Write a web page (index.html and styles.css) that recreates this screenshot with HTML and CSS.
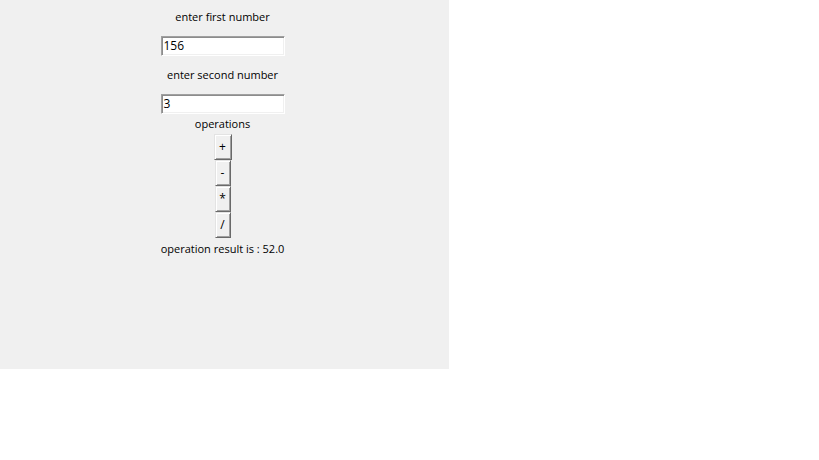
FILE: index.html
```html
<!DOCTYPE html>
<html>
<head>
<meta charset="utf-8">
<link rel="stylesheet" href="styles.css">
</head>
<body>
<div class="window">
  <div class="label label-first">enter first number</div>
  <div class="entry entry-first">156</div>
  <div class="label label-second">enter second number</div>
  <div class="entry">3</div>
  <div class="label label-ops">operations</div>
  <div class="buttons">
    <div class="btn btn-wide">+</div>
    <div class="btn">-</div>
    <div class="btn">*</div>
    <div class="btn">/</div>
  </div>
  <div class="label label-result">operation result is : 52.0</div>
</div>
</body>
</html>
```
FILE: styles.css
```css
html, body {
  margin: 0;
  padding: 0;
  background: #ffffff;
}
.window {
  width: 449px;
  height: 369px;
  background: #f0f0f0;
  box-sizing: border-box;
  padding-right: 4px;
  display: flex;
  flex-direction: column;
  align-items: center;
  font-family: "Open Sans", "Noto Sans", sans-serif;
  font-size: 11px;
  color: #000;
}
.label {
  height: 21px;
  line-height: 21px;
  white-space: nowrap;
}
.label-first {
  margin-top: 6px;
}
.entry-first {
  margin-top: 9px;
}
.label-second {
  margin-top: 8px;
  margin-bottom: 9px;
}
.entry {
  width: 124px;
  height: 20px;
  box-sizing: border-box;
  background: #fff;
  border-top: 1px solid #a0a0a0;
  border-left: 1px solid #a0a0a0;
  border-right: 1px solid #ffffff;
  border-bottom: 1px solid #ffffff;
  box-shadow: inset 1px 1px 0 #8c8c8c, inset -1px -1px 0 #f0f0f0;
  padding-left: 2px;
  line-height: 17px;
  font-size: 12px;
}
.label-ops {
  height: 20px;
  line-height: 20px;
}
.buttons {
  display: flex;
  flex-direction: column;
  align-items: center;
}
.btn {
  width: 16px;
  height: 26px;
  box-sizing: border-box;
  background: #f0f0f0;
  border-top: 1px solid #e3e3e3;
  border-left: 1px solid #e3e3e3;
  border-right: 1px solid #696969;
  border-bottom: 1px solid #696969;
  box-shadow: inset 1px 1px 0 #ffffff, inset -1px -1px 0 #a0a0a0;
  text-align: center;
  line-height: 23px;
  font-size: 12px;
}
.btn-wide {
  width: 18px;
}
.label-result {
  height: 22px;
  line-height: 22px;
}
```
